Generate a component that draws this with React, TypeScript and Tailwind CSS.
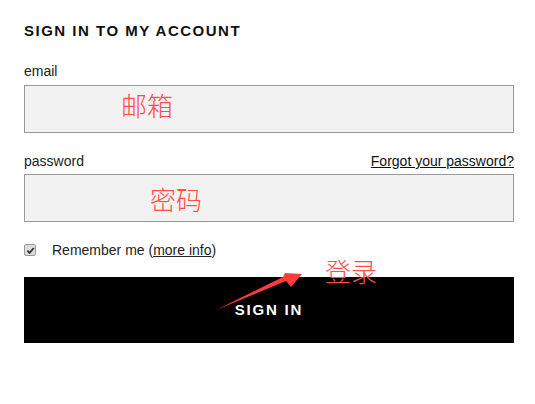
import React from 'react';

const body = { fontFamily: '"Liberation Sans", Arial, sans-serif' };
const cjk = { fontFamily: '"Noto Sans CJK SC", sans-serif' };

function Arrow() {
  return (
    <svg className="absolute left-0 top-0" width="535" height="404" viewBox="0 0 535 404">
      <polygon
        points="216,310 286,281 291,287 302,274 285,273 283,277"
        fill="#ff3b3b"
      />
    </svg>
  );
}

export default function App() {
  return (
    <div className="relative w-[535px] h-[404px] bg-white text-[#222]" style={body}>
      <div className="ml-[24px] w-[490px] pt-[21px] flex flex-col">
        <h2 className="text-[15px] leading-[20px] font-semibold tracking-[0.1em] text-[#111]">
          SIGN IN TO MY ACCOUNT
        </h2>

        <label className="mt-[22px] text-[14px] leading-[16px]">email</label>
        <div className="relative mt-[6px] h-[48px] border border-[#999] bg-[#f2f2f2]">
          <span
            className="absolute left-[96px] top-[-1px] text-[26px] font-light text-[#ff4d4d]"
            style={cjk}
          >
            邮箱
          </span>
        </div>

        <div className="mt-[20px] flex items-end justify-between text-[14px] leading-[16px]">
          <span>password</span>
          <a href="#" className="underline text-[#111]">Forgot your password?</a>
        </div>
        <div className="relative mt-[5px] h-[48px] border border-[#999] bg-[#f2f2f2]">
          <span
            className="absolute left-[125px] top-[4px] text-[26px] font-light text-[#ff4d4d]"
            style={cjk}
          >
            密码
          </span>
        </div>

        <div className="mt-[20px] flex items-center gap-[16px] text-[14px] leading-[16px]">
          <span className="w-[12px] h-[12px] rounded-[2px] border border-[#9a9a9a] bg-[#dcdcdc] flex items-center justify-center">
            <svg width="9" height="9" viewBox="0 0 10 10">
              <path d="M1.5 5.2 L4 7.6 L8.6 2.2" stroke="#333" strokeWidth="2" fill="none" />
            </svg>
          </span>
          <span>
            Remember me (<a href="#" className="underline">more info</a>)
          </span>
        </div>

        <button className="mt-[19px] h-[66px] bg-black text-white text-[15px] font-semibold tracking-[0.12em]">
          SIGN IN
        </button>
      </div>

      <span
        className="absolute left-[325px] top-[251px] text-[26px] font-light text-[#ff4d4d]"
        style={cjk}
      >
        登录
      </span>
      <Arrow />
    </div>
  );
}
